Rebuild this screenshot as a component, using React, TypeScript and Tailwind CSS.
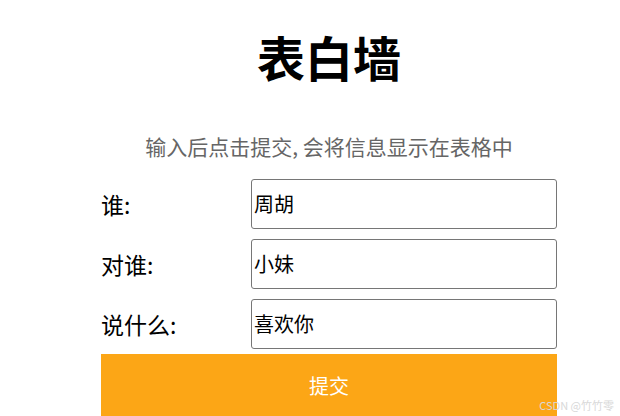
import React from "react";

const font = { fontFamily: '"Noto Sans CJK SC", "Noto Sans", sans-serif' };

export default function App() {
  const rows = [
    { label: "谁:", value: "周胡" },
    { label: "对谁:", value: "小妹" },
    { label: "说什么:", value: "喜欢你" },
  ];
  return (
    <div className="relative w-[620px] h-[416px] overflow-hidden bg-white" style={font}>
      <div className="ml-[101px] w-[456px] flex flex-col">
        <h1 className="mt-[20px] text-center text-[48px] leading-[72px] font-bold text-black">表白墙</h1>
        <p className="mt-[39px] text-center text-[21px] leading-[30px] text-[#666666]">
          输入后点击提交, 会将信息显示在表格中
        </p>
        <div className="mt-[18px] flex flex-col gap-[10px]">
          {rows.map((r) => (
            <div key={r.label} className="flex items-center h-[50px]">
              <span className="w-[150px] text-[23px] text-black">{r.label}</span>
              <div className="flex-1 h-[50px] border border-[#767676] rounded-[3px] flex items-center pl-[2px] text-[20px] text-black">
                {r.value}
              </div>
            </div>
          ))}
        </div>
        <button className="mt-[5px] h-[64px] bg-[#fca616] text-white text-[20px] flex items-center justify-center">
          提交
        </button>
      </div>
      <div className="absolute right-[6px] bottom-[4px] text-[11px] leading-[14px] text-[#d8d8d8]">CSDN @竹竹零</div>
    </div>
  );
}
